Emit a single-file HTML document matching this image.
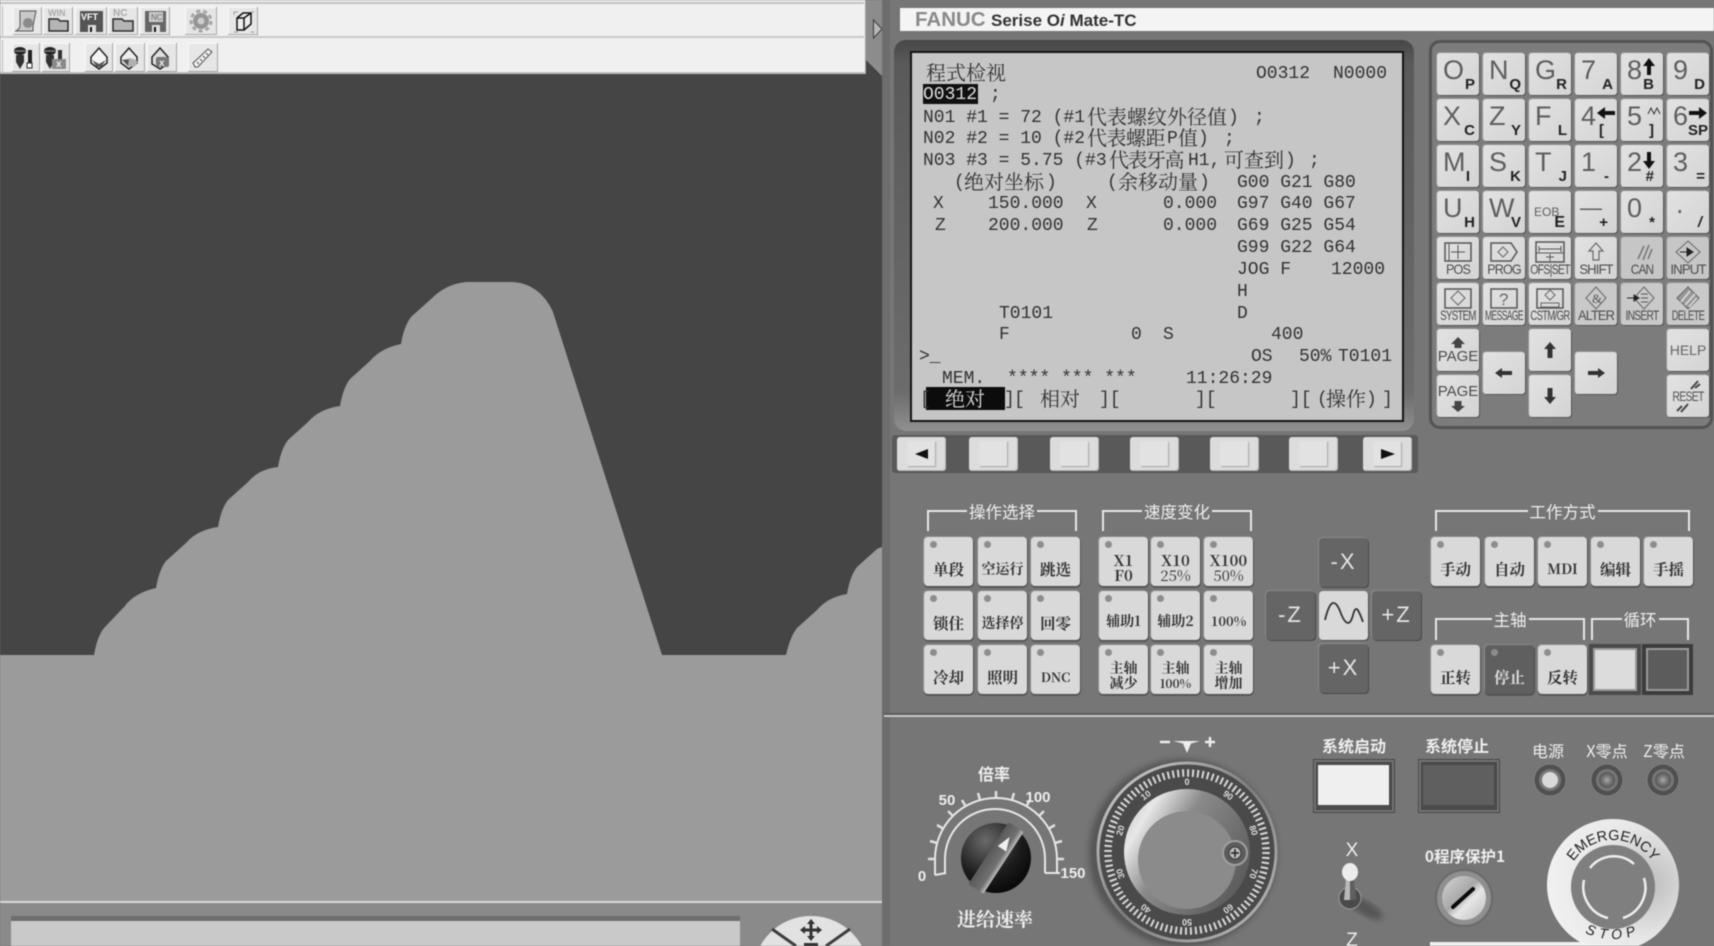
<!DOCTYPE html>
<html><head><meta charset="utf-8"><style>
html,body{margin:0;padding:0;width:1714px;height:946px;overflow:hidden;background:#767676}
#p{position:absolute;left:0;top:0;width:1714px;height:946px;overflow:hidden;filter:blur(.45px)}
*{box-sizing:border-box}
.a{position:absolute}
.l{position:absolute;left:0;top:0;height:20px;width:0;font:18px/18px "Liberation Mono","Noto Serif CJK SC",monospace;color:#333;transform:translateY(1px)}
.l span{position:absolute;white-space:pre}
.l .c{font:20px/20px "Noto Serif CJK SC","Liberation Serif",serif;top:-3px;color:#333}
.k{position:absolute;width:42px;height:42px;background:linear-gradient(135deg,#e2e2e2,#d4d4d4);border-radius:3px;box-shadow:1px 1px 0 #555,-1px -1px 0 #8f8f8f;font-family:"Liberation Sans",sans-serif;overflow:hidden}
.k b{position:absolute;left:6px;top:4px;font:400 27px/27px "Liberation Sans",sans-serif;color:#5e5e5e}
.k i{position:absolute;right:4px;bottom:3px;font:700 15px/15px "Liberation Sans",sans-serif;color:#222}
.k u{position:absolute;left:0;width:42px;bottom:3px;display:flex;justify-content:center;text-decoration:none;font:14px/14px "Liberation Sans",sans-serif;color:#4c4c4c;letter-spacing:-1px;white-space:nowrap}
.k svg{position:absolute;left:0;top:0}
.b{position:absolute;width:49px;height:49px;background:#d9d9d9;border-radius:4px;box-shadow:1px 1px 0 #4f4f4f,0 2px 0 #5c5c5c,-1px -1px 0 #8b8b8b;font:700 15.5px/15px "Noto Serif CJK SC","Liberation Serif",serif;color:#333;text-align:center;white-space:nowrap}
.b:before{content:"";position:absolute;left:6px;top:4px;width:7px;height:7px;border-radius:50%;background:#8d8d8d}
.b span{position:absolute;left:0;width:49px;top:24px;line-height:16px}
.b span.s{top:16px;line-height:15px;font-size:15px}
.g{position:absolute;width:49px;height:49px;background:#656565;border-radius:4px;box-shadow:1px 1px 0 #4a4a4a,-1px -1px 0 #8a8a8a;color:#e6e6e6;font:22px/47px "Liberation Sans",sans-serif;text-align:center;letter-spacing:2px}
.h{position:absolute;border:2px solid #e8e8e8;border-bottom:0;height:21px}
.h em{position:absolute;top:-11px;left:0;width:100%;text-align:center;font:normal 16.5px/20px "Noto Sans CJK SC",sans-serif;color:#eee}
.h em span{background:#767676;padding:0 2px}
.f{position:absolute;top:437px;width:49px;height:34px;background:#dcdcdc;border-radius:3px;box-shadow:inset -1px -1px 0 #b5b5b5}
.f:after{content:"";position:absolute;left:10px;top:4px;width:28px;height:25px;background:#e2e2e2;box-shadow:1px 1px 1px #a5a5a5}
.w{position:absolute;color:#efefef;font:700 16px/18px "Noto Sans CJK SC",sans-serif;white-space:nowrap;transform:translate(-50%,-50%)}
.tb{position:absolute;background:#e6e6e6;box-shadow:inset -1px -1px 0 #a8a8a8,inset 1px 1px 0 #f8f8f8}
</style></head><body><div id="p">

<!-- left viewport -->
<div class="a" style="left:0;top:0;width:884px;height:903px;background:#454545"></div>
<svg class="a" style="left:0;top:0" width="884" height="903" viewBox="0 0 884 903">
<path fill="#9b9b9b" d="M0 655H94Q97 637 104 628L124 607Q134 593 156 588Q159 570 166 561L186 543Q197 530 218 527Q221 509 228 500L248 482Q259 469 278 467Q281 449 288 440L308 422Q319 409 340 406Q343 388 350 379L370 361Q381 348 401 344Q404 326 411 317L431 299Q446 284 466 282H513Q540 284 553 312L662 655H786Q790 637 797 628L817 610Q828 597 847 594Q850 576 857 567L877 549L884 546V903H0Z"/>
</svg>
<div class="a" style="left:0;top:901px;width:884px;height:2px;background:#dadada"></div>
<div class="a" style="left:882px;top:880px;width:2px;height:22px;background:#d0d0d0"></div>
<div class="a" style="left:0;top:903px;width:884px;height:43px;background:#8a8a8a"></div>
<div class="a" style="left:11px;top:916px;width:729px;height:30px;background:#c9c9c9;border-top:5px solid #6e6e6e"></div>
<svg class="a" style="left:750px;top:910px" width="134" height="36" viewBox="750 910 134 36">
<path d="M760.200 946A58 58 0 0 1 861.800 946Z" fill="#e2e2e2"/>
<path d="M772 929L796 946M850 929L826 946" stroke="#3e3e3e" stroke-width="3" fill="none"/>
<path d="M811 921V939M802 930H820" stroke="#333" stroke-width="3"/><path d="M811 919l-4 5h8zM811 941l-4-5h8zM800 930l5-4v8zM822 930l-5-4v8z" fill="#333"/>
<rect x="804" y="943" width="14" height="3" fill="#333"/>
</svg>

<!-- strip -->
<div class="a" style="left:866px;top:0;width:16px;height:60px;background:#8c8c8c"></div>
<svg class="a" style="left:866px;top:0" width="18" height="76"><path d="M0 60L16 76V60V0H0Z" fill="#8c8c8c"/><path d="M7.500 20L16 29L7.500 38Z" fill="#b8b8b8" stroke="#3c3c3c" stroke-width="1"/></svg>
<div class="a" style="left:882px;top:0;width:8px;height:946px;background:#6d6d6d"></div>

<!-- toolbar -->
<div class="a" style="left:0;top:0;width:866px;height:74px;background:#f0f0f0;border-right:1px solid #a0a0a0;border-bottom:2px solid #bcbcbc"></div>
<div class="a" style="left:0;top:2px;width:864px;height:2px;background:#c2c2c2"></div>
<div class="a" style="left:0;top:36px;width:864px;height:2px;background:#c8c8c8"></div>
<div class="a" style="left:2px;top:6px;width:1px;height:30px;background:#bbb"></div>
<div class="a" style="left:2px;top:40px;width:1px;height:32px;background:#bbb"></div>
<div class="tb" style="left:13px;top:7px;width:29px;height:28px"></div>
<div class="tb" style="left:43px;top:7px;width:30px;height:28px"></div>
<div class="tb" style="left:75px;top:7px;width:32px;height:28px"></div>
<div class="tb" style="left:108px;top:7px;width:30px;height:28px"></div>
<div class="tb" style="left:140px;top:7px;width:30px;height:28px"></div>
<div class="tb" style="left:185px;top:7px;width:32px;height:28px"></div>
<div class="tb" style="left:228px;top:7px;width:30px;height:28px"></div>
<div class="tb" style="left:12px;top:43px;width:28px;height:29px"></div>
<div class="tb" style="left:42px;top:43px;width:28px;height:29px"></div>
<div class="tb" style="left:85px;top:43px;width:28px;height:29px"></div>
<div class="tb" style="left:115px;top:43px;width:30px;height:29px"></div>
<div class="tb" style="left:147px;top:43px;width:30px;height:29px"></div>
<div class="tb" style="left:188px;top:43px;width:30px;height:29px"></div>
<svg class="a" style="left:0;top:0" width="270" height="76" viewBox="0 0 270 76">
<path d="M20 11H36L33 26V31H16Q21 28 20 24Z" fill="#c8c8c8" stroke="#555"/><circle cx="28" cy="23" r="5" fill="#8a8a8a"/>
<text x="48" y="16" font-family="Liberation Sans" font-weight="700" font-size="9" fill="#aaa">WIN</text><path d="M49 19H58L60 21H68V31H49Z" fill="#b5b5b5" stroke="#2a2a2a" stroke-width="1.500"/>
<rect x="80" y="11" width="23" height="21" fill="#555"/><text x="81" y="20" font-family="Liberation Sans" font-weight="700" font-size="9" fill="#fff">VFT</text><rect x="88" y="25" width="8" height="7" fill="#ddd"/><rect x="90" y="27" width="2" height="5" fill="#111"/>
<text x="113" y="16" font-family="Liberation Sans" font-weight="700" font-size="10" fill="#aaa">NC</text><path d="M113 19H122L124 21H133V31H113Z" fill="#b5b5b5" stroke="#2a2a2a" stroke-width="1.500"/>
<rect x="145" y="11" width="21" height="21" fill="#666"/><rect x="149" y="12" width="14" height="10" fill="#ccc"/><text x="151" y="20" font-family="Liberation Sans" font-size="8" fill="#666">NC</text><rect x="152" y="25" width="8" height="7" fill="#ddd"/><rect x="154" y="27" width="2" height="5" fill="#111"/>
<circle cx="201" cy="21" r="8" fill="#959595"/><circle cx="201" cy="21" r="3.500" fill="#ccc"/><circle cx="201" cy="21" r="10" fill="none" stroke="#a5a5a5" stroke-width="3" stroke-dasharray="4 3"/>
<path d="M237 18L243 13H251V24L244 30H237ZM237 18H244V30M244 18L251 13" fill="#eee" stroke="#111" stroke-width="1.500"/><path d="M234 12h4M234 12v3M254 12h-3M234 32h4M254 32h-3" stroke="#999"/>
<ellipse cx="20" cy="51" rx="6" ry="4" fill="#222"/><rect x="14" y="50" width="12" height="2" fill="#666"/><path d="M16 55H24V62L20 69L16 62Z" fill="#333"/><rect x="28" y="50" width="4" height="13" fill="#222"/><rect x="27" y="63" width="5" height="5" fill="#fff" stroke="#222"/>
<ellipse cx="50" cy="51" rx="6" ry="4" fill="#222"/><rect x="44" y="50" width="12" height="2" fill="#666"/><path d="M46 55H54V62L50 69L46 62Z" fill="#333"/><rect x="58" y="50" width="4" height="12" fill="#333"/><rect x="52" y="59" width="14" height="10" fill="#8a8a8a"/><text x="56" y="67" font-family="Liberation Sans" font-weight="700" font-size="10" fill="#eee">x</text>
<path d="M99 48L107 57V63L99 69L91 63V57Z" fill="#f4f4f4" stroke="#222" stroke-width="1.500"/><path d="M92 60L97 67H101L106 60L99 64Z" fill="#555"/>
<path d="M129 48L137 57V63L129 69L121 63V57Z" fill="#ededed" stroke="#222" stroke-width="1.500"/><path d="M122 60L129 67V59Z" fill="#555"/><path d="M129 58l5 1 4 3-4 5-6-1z" fill="#b0b0b0"/>
<path d="M160 48L168 57V64L160 69L152 64V57Z" fill="#ddd" stroke="#222" stroke-width="1.500"/><rect x="156" y="57" width="13" height="10" rx="2" fill="#777"/><text x="159" y="66" font-family="Liberation Sans" font-weight="700" font-size="10" fill="#eee">x</text>
<path d="M195 67L193 63L208 49L212 52L198 67Z" fill="#eee" stroke="#555" stroke-width="1"/><path d="M197 62l2 2M200 59l2 2M203 56l2 2M206 53l2 2" stroke="#555"/>
</svg>

<!-- header -->
<div class="a" style="left:900px;top:8px;width:814px;height:23px;background:#f4f4f4"></div>
<div class="a" style="left:915px;top:8px;font:700 20.500px/23px 'Liberation Sans',sans-serif;color:#8a8a8a;white-space:nowrap">FANUC</div>
<div class="a" style="left:991px;top:9px;font:700 17px/23px 'Liberation Sans',sans-serif;color:#333;white-space:nowrap">Serise O<i>i</i> Mate-TC</div>

<!-- screen -->
<div class="a" style="left:894px;top:40px;width:520px;height:391px;border-radius:12px;background:linear-gradient(#474747 0,#5a5a5a 6%,#6c6c6c 90%,#909090 100%)"></div>
<div class="a" style="left:910px;top:51px;width:494px;height:371px;background:#c6c6c6;border:2px solid #141414"></div>
<div class="a" style="left:923px;top:84px;width:55px;height:20px;background:#111"></div>
<div class="a" style="left:926px;top:387px;width:79px;height:23px;background:#0c0c0c"></div>

<div class="l" style="top:64px"><span class="c" style="left:926px">程式检视</span><span style="left:1256px">O0312</span><span style="left:1333px">N0000</span></div>
<div class="l" style="top:85px"><span style="left:923px;color:#ddd">O0312</span><span style="left:990px">;</span></div>
<div class="l" style="top:108px"><span style="left:923px">N01 #1 = 72 (#1</span><span class="c" style="left:1087px">代表螺纹外径值</span><span style="left:1228px">)</span><span style="left:1254px">;</span></div>
<div class="l" style="top:129px"><span style="left:923px">N02 #2 = 10 (#2</span><span class="c" style="left:1087px;letter-spacing:-.5px">代表螺距</span><span style="left:1167px">P</span><span class="c" style="left:1178px">值</span><span style="left:1198px">)</span><span style="left:1224px">;</span></div>
<div class="l" style="top:151px"><span style="left:923px">N03 #3 = 5.75 (#3</span><span class="c" style="left:1109px;letter-spacing:-1.500px">代表牙高</span><span style="left:1188px">H1,</span><span class="c" style="left:1224px">可查到</span><span style="left:1285px">)</span><span style="left:1309px">;</span></div>
<div class="l" style="top:173px"><span style="left:954px">(</span><span class="c" style="left:964px">绝对坐标</span><span style="left:1046px">)</span><span style="left:1107px">(</span><span class="c" style="left:1118px">余移动量</span><span style="left:1199px">)</span><span style="left:1237px">G00 G21 G80</span></div>
<div class="l" style="top:194px"><span style="left:933px">X</span><span style="left:988px">150.000</span><span style="left:1086px">X</span><span style="left:1163px">0.000</span><span style="left:1237px">G97 G40 G67</span></div>
<div class="l" style="top:216px"><span style="left:935px">Z</span><span style="left:988px">200.000</span><span style="left:1087px">Z</span><span style="left:1163px">0.000</span><span style="left:1237px">G69 G25 G54</span></div>
<div class="l" style="top:238px"><span style="left:1237px">G99 G22 G64</span></div>
<div class="l" style="top:260px"><span style="left:1237px">JOG F</span><span style="left:1331px">12000</span></div>
<div class="l" style="top:282px"><span style="left:1237px">H</span></div>
<div class="l" style="top:304px"><span style="left:999px">T0101</span><span style="left:1237px">D</span></div>
<div class="l" style="top:325px"><span style="left:999px">F</span><span style="left:1131px">0</span><span style="left:1163px">S</span><span style="left:1271px">400</span></div>
<div class="l" style="top:347px"><span style="left:919px">&gt;_</span><span style="left:1251px">OS</span><span style="left:1299px">50%</span><span style="left:1338px">T0101</span></div>
<div class="l" style="top:369px"><span style="left:942px">MEM.</span><span style="left:1007px">**** *** ***</span><span style="left:1186px">11:26:29</span></div>
<div class="l" style="top:390px"><span style="left:920px">[</span><span class="c" style="left:945px;color:#ddd">绝对</span><span style="left:1004px">]</span><span style="left:1014px">[</span><span class="c" style="left:1040px">相对</span><span style="left:1099px">][</span><span style="left:1195px">][</span><span style="left:1290px">][</span><span style="left:1317px">(</span><span class="c" style="left:1326px">操作</span><span style="left:1366px">)</span><span style="left:1382px">]</span></div>

<!-- soft keys -->
<div class="a" style="left:892px;top:435px;width:526px;height:38px;background:#595959;border-radius:3px"></div>
<div class="f" style="left:897px"></div><div class="f" style="left:969px"></div><div class="f" style="left:1050px"></div><div class="f" style="left:1130px"></div><div class="f" style="left:1210px"></div><div class="f" style="left:1289px"></div><div class="f" style="left:1363px"></div>
<svg class="a" style="left:880px;top:430px;z-index:2" width="540" height="50"><path d="M35 24L48 19V29Z" fill="#111"/><path d="M501 19L515 24L501 29Z" fill="#111"/></svg>

<!-- keypad -->
<div class="a" style="left:1429px;top:40px;width:284px;height:389px;border:3px solid #535353;border-radius:11px;background:#7c7c7c"></div>
<div class="k" style="left:1437px;top:53px"><b>O</b><i>P</i></div>
<div class="k" style="left:1483px;top:53px"><b>N</b><i>Q</i></div>
<div class="k" style="left:1529px;top:53px"><b>G</b><i>R</i></div>
<div class="k" style="left:1575px;top:53px"><b>7</b><i>A</i></div>
<div class="k" style="left:1621px;top:53px"><b>8</b><i style="right:9px">B</i><svg width="42" height="42"><path d="M28 5L34 13H30V22H26V13H22Z" fill="#111"/></svg></div>
<div class="k" style="left:1667px;top:53px"><b>9</b><i>D</i></div>
<div class="k" style="left:1437px;top:99px"><b>X</b><i>C</i></div>
<div class="k" style="left:1483px;top:99px"><b>Z</b><i>Y</i></div>
<div class="k" style="left:1529px;top:99px"><b>F</b><i>L</i></div>
<div class="k" style="left:1575px;top:99px"><b>4</b><i style="right:13px">[</i><svg width="42" height="42"><path d="M22 14L30 8V12H40V16H30V20Z" fill="#111"/></svg></div>
<div class="k" style="left:1621px;top:99px"><b>5</b><i style="right:9px">]</i><svg width="42" height="42"><path d="M27 15L30 9L33 15L36 9L39 15" fill="none" stroke="#333"/></svg></div>
<div class="k" style="left:1667px;top:99px"><b>6</b><i style="right:1px">SP</i><svg width="42" height="42"><path d="M40 14L32 8V12H22V16H32V20Z" fill="#111"/></svg></div>
<div class="k" style="left:1437px;top:145px"><b>M</b><i style="right:9px">I</i></div>
<div class="k" style="left:1483px;top:145px"><b>S</b><i>K</i></div>
<div class="k" style="left:1529px;top:145px"><b>T</b><i>J</i></div>
<div class="k" style="left:1575px;top:145px"><b>1</b><i style="right:8px">-</i></div>
<div class="k" style="left:1621px;top:145px"><b>2</b><i style="right:9px">#</i><svg width="42" height="42"><path d="M28 24L34 16H30V7H26V16H22Z" fill="#111"/></svg></div>
<div class="k" style="left:1667px;top:145px"><b>3</b><i>=</i></div>
<div class="k" style="left:1437px;top:191px"><b>U</b><i>H</i></div>
<div class="k" style="left:1483px;top:191px"><b>W</b><i>V</i></div>
<div class="k" style="left:1529px;top:191px"><b style="font-size:12px;top:8px;left:5px">EOB</b><i style="right:6px;font-size:16px">E</i></div>
<div class="k" style="left:1575px;top:191px"><b style="font-size:22px;top:3px;left:5px">&#8212;</b><i style="right:9px">+</i></div>
<div class="k" style="left:1621px;top:191px"><b>0</b><i style="right:8px">*</i></div>
<div class="k" style="left:1667px;top:191px"><b style="left:9px;top:0">.</b><i style="right:7px;font-style:italic">/</i></div>

<div class="k" style="left:1437px;top:237px"><u style="transform:scaleX(.9)">POS</u><svg width="42" height="42"><rect x="8" y="6" width="26" height="18" fill="none" stroke="#555" stroke-width="1.500"/><path d="M21 8V22M14 15H28M12 6V24" stroke="#555" fill="none"/></svg></div>
<div class="k" style="left:1483px;top:237px"><u style="transform:scaleX(.9)">PROG</u><svg width="42" height="42"><path d="M8 6H28L34 15L28 24H8Z" fill="none" stroke="#555" stroke-width="1.500"/><path d="M20 10L25 15L20 20L15 15Z" fill="none" stroke="#666"/></svg></div>
<div class="k" style="left:1529px;top:237px"><u style="transform:scaleX(.75)">OFS|SET</u><svg width="42" height="42"><rect x="7" y="5" width="28" height="20" fill="none" stroke="#555" stroke-width="1.500"/><path d="M10 12H32M10 9V15M32 9V15M7 16H35M21 17V24M17 20H25" stroke="#555" fill="none"/></svg></div>
<div class="k" style="left:1575px;top:237px"><u style="transform:scaleX(.94)">SHIFT</u><svg width="42" height="42"><path d="M21 6L28 14H24V23H18V14H14Z" fill="none" stroke="#666" stroke-width="1.200"/></svg></div>
<div class="k" style="left:1621px;top:237px;background:#c6c6c6"><u style="transform:scaleX(.85)">CAN</u><svg width="42" height="42"><path d="M17 22L23 9M22 23L28 8M27 22L31 12" stroke="#777" stroke-width="1.600"/></svg></div>
<div class="k" style="left:1667px;top:237px;background:#c6c6c6"><u style="transform:scaleX(.95)">INPUT</u><svg width="42" height="42"><path d="M21 4L33 15L21 26L9 15Z" fill="none" stroke="#666"/><path d="M13 15H23M20 11L26 15L20 19Z" stroke="#222" fill="#222"/></svg></div>

<div class="k" style="left:1437px;top:283px"><u style="transform:scaleX(.69)">SYSTEM</u><svg width="42" height="42"><rect x="8" y="6" width="26" height="19" fill="none" stroke="#555" stroke-width="1.500"/><path d="M21 8L28 15L21 22L14 15Z" fill="none" stroke="#666"/></svg></div>
<div class="k" style="left:1483px;top:283px"><u style="transform:scaleX(.61)">MESSAGE</u><svg width="42" height="42"><rect x="8" y="6" width="26" height="19" fill="none" stroke="#555" stroke-width="1.500"/><text x="16" y="22" font-family="Liberation Sans" font-size="17" fill="#666">?</text></svg></div>
<div class="k" style="left:1529px;top:283px"><u style="transform:scaleX(.68)">CSTM/GR</u><svg width="42" height="42"><rect x="8" y="6" width="26" height="19" fill="none" stroke="#555" stroke-width="1.500"/><path d="M21 7L26 12L21 17L16 12ZM12 20H30V24H12Z" fill="none" stroke="#666"/></svg></div>
<div class="k" style="left:1575px;top:283px;background:#c9c9c9"><u style="transform:scaleX(.92)">ALTER</u><svg width="42" height="42"><path d="M21 4L31 15L21 26L11 15Z" fill="none" stroke="#666"/><text x="17" y="20" font-family="Liberation Serif" font-size="13" fill="#555">&amp;</text></svg></div>
<div class="k" style="left:1621px;top:283px;background:#c9c9c9"><u style="transform:scaleX(.73)">INSERT</u><svg width="42" height="42"><path d="M23 4L33 15L23 26L13 15Z" fill="none" stroke="#666"/><path d="M6 15H16M13 12L18 15L13 18Z" stroke="#222" fill="#222"/><path d="M20 11H27M20 15H27M20 19H27" stroke="#555"/></svg></div>
<div class="k" style="left:1667px;top:283px;background:#c9c9c9"><u style="transform:scaleX(.67)">DELETE</u><svg width="42" height="42"><path d="M21 4L32 15L21 26L10 15Z" fill="#999" stroke="#666"/><path d="M14 19L23 8M18 22L28 11M22 24L30 15" stroke="#e0e0e0" stroke-width="1.500"/></svg></div>

<div class="k" style="left:1437px;top:329px"><u style="font:15px/15px 'Liberation Sans',sans-serif;letter-spacing:0;bottom:7px">PAGE</u><svg width="42" height="42"><path d="M21 8L28 15H24.500V19H17.500V15H14Z" fill="#444"/></svg></div>
<div class="k" style="left:1437px;top:375px"><u style="font:15px/15px 'Liberation Sans',sans-serif;letter-spacing:0;bottom:18px">PAGE</u><svg width="42" height="42"><path d="M21 37L28 31H24.500V26H17.500V31H14Z" fill="#444"/></svg></div>
<div class="k" style="left:1483px;top:352px"><svg width="42" height="42"><path d="M12 21L19 16V19H29V23H19V26Z" fill="#333"/></svg></div>
<div class="k" style="left:1529px;top:329px"><svg width="42" height="42"><path d="M21 13L27 20H23.500V29H18.500V20H15Z" fill="#333"/></svg></div>
<div class="k" style="left:1529px;top:375px"><svg width="42" height="42"><path d="M21 29L27 22H23.500V13H18.500V22H15Z" fill="#333"/></svg></div>
<div class="k" style="left:1575px;top:352px"><svg width="42" height="42"><path d="M30 21L23 16V19H13V23H23V26Z" fill="#333"/></svg></div>
<div class="k" style="left:1667px;top:329px"><u style="font:14px/14px 'Liberation Sans',sans-serif;letter-spacing:0;bottom:14px;color:#666">HELP</u></div>
<div class="k" style="left:1667px;top:375px"><u style="font:14px/14px 'Liberation Sans',sans-serif;bottom:14px;color:#555;transform:scaleX(.75)">RESET</u><svg width="42" height="42"><path d="M24 14L31 6M14 37L21 29M28 13L33 9M10 36L15 31" stroke="#444" stroke-width="2"/></svg></div>

<!-- operator groups -->
<div class="h" style="left:927px;top:510px;width:150px"><em><span>操作选择</span></em></div>
<div class="h" style="left:1102px;top:510px;width:150px"><em><span>速度变化</span></em></div>
<div class="h" style="left:1435px;top:510px;width:255px"><em><span>工作方式</span></em></div>
<div class="h" style="left:1435px;top:618px;width:150px;height:22px"><em><span>主轴</span></em></div>
<div class="h" style="left:1591px;top:618px;width:98px;height:22px"><em><span>循环</span></em></div>

<div class="b" style="left:924px;top:537px"><span>单段</span></div>
<div class="b" style="left:978px;top:537px"><span style="font-size:14px">空运行</span></div>
<div class="b" style="left:1031px;top:537px"><span>跳选</span></div>
<div class="b" style="left:924px;top:591px"><span>锁住</span></div>
<div class="b" style="left:978px;top:591px"><span style="font-size:14px">选择停</span></div>
<div class="b" style="left:1031px;top:591px"><span>回零</span></div>
<div class="b" style="left:924px;top:645px"><span>冷却</span></div>
<div class="b" style="left:978px;top:645px"><span>照明</span></div>
<div class="b" style="left:1031px;top:645px"><span style="font-size:13px">DNC</span></div>

<div class="b" style="left:1099px;top:537px"><span class="s">X1<br>F0</span></div>
<div class="b" style="left:1151px;top:537px"><span class="s">X10<br><span style="position:static;font-weight:400">25%</span></span></div>
<div class="b" style="left:1204px;top:537px"><span class="s">X100<br><span style="position:static;font-weight:400">50%</span></span></div>
<div class="b" style="left:1099px;top:591px"><span style="font-size:14px;top:22px">辅助1</span></div>
<div class="b" style="left:1151px;top:591px"><span style="font-size:14px;top:22px">辅助2</span></div>
<div class="b" style="left:1204px;top:591px"><span style="font-size:13px;top:22px">100%</span></div>
<div class="b" style="left:1099px;top:645px"><span class="s" style="font-size:14px">主轴<br>减少</span></div>
<div class="b" style="left:1151px;top:645px"><span class="s" style="font-size:14px">主轴<br><span style="position:static;font-size:12px">100%</span></span></div>
<div class="b" style="left:1204px;top:645px"><span class="s" style="font-size:14px">主轴<br>增加</span></div>

<div class="g" style="left:1319px;top:538px">-X</div>
<div class="g" style="left:1266px;top:591px">-Z</div>
<div class="g" style="left:1372px;top:591px">+Z</div>
<div class="g" style="left:1319px;top:644px">+X</div>
<div class="a" style="left:1319px;top:591px;width:49px;height:49px;background:#d9d9d9;border-radius:4px;box-shadow:1px 1px 0 #4f4f4f"></div>
<svg class="a" style="left:1319px;top:591px" width="49" height="49"><path d="M6 29C11 8 16 8 21 20C26 34 31 36 34 24C37 12 40 20 44 31" fill="none" stroke="#333" stroke-width="1.800"/></svg>

<div class="b" style="left:1431px;top:537px"><span>手动</span></div>
<div class="b" style="left:1485px;top:537px"><span>自动</span></div>
<div class="b" style="left:1538px;top:537px"><span style="font-size:14px">MDI</span></div>
<div class="b" style="left:1591px;top:537px"><span>编辑</span></div>
<div class="b" style="left:1644px;top:537px"><span>手摇</span></div>
<div class="b" style="left:1431px;top:645px"><span>正转</span></div>
<div class="b" style="left:1485px;top:645px;background:#5f5f5f;color:#ddd"><span>停止</span></div>
<div class="b" style="left:1538px;top:645px"><span>反转</span></div>
<div class="a" style="left:1589px;top:644px;width:52px;height:51px;background:#dcdcdc;border:4px solid #4a4a4a;box-shadow:inset 0 0 0 2px #9a9a9a"></div>
<div class="a" style="left:1642px;top:644px;width:51px;height:51px;background:#5c5c5c;border:4px solid #3c3c3c;box-shadow:inset 0 0 0 2px #9a9a9a"></div>

<!-- divider -->
<div class="a" style="left:884px;top:713px;width:830px;height:2px;background:#5d5d5d"></div>
<div class="a" style="left:884px;top:715px;width:830px;height:2px;background:#c8c8c8"></div>

<!-- lower controls -->
<svg class="a" style="left:884px;top:717px" width="830" height="229" viewBox="884 717 830 229">
<defs>
<linearGradient id="m" x1="0" y1="0" x2="1" y2="0.600"><stop offset="0" stop-color="#b5b5b5"/><stop offset=".22" stop-color="#e8e8e8"/><stop offset=".48" stop-color="#8a8a8a"/><stop offset="1" stop-color="#5e5e5e"/></linearGradient>
<linearGradient id="r" x1="0" y1="0" x2="1" y2="1"><stop offset="0" stop-color="#d8d8d8"/><stop offset=".5" stop-color="#7e7e7e"/><stop offset="1" stop-color="#c0c0c0"/></linearGradient>
<linearGradient id="lk" x1="0" y1="0" x2="1" y2="1"><stop offset="0" stop-color="#d5d5d5"/><stop offset=".45" stop-color="#a8a8a8"/><stop offset=".6" stop-color="#e6e6e6"/><stop offset="1" stop-color="#bcbcbc"/></linearGradient>
<radialGradient id="kn" cx=".35" cy=".25" r=".9"><stop offset="0" stop-color="#6a6a6a"/><stop offset=".55" stop-color="#1d1d1d"/><stop offset="1" stop-color="#000"/></radialGradient>
<linearGradient id="pb" x1="0" y1="0" x2="1" y2="0"><stop offset="0" stop-color="#5a5a5a"/><stop offset=".7" stop-color="#707070"/><stop offset="1" stop-color="#bdbdbd"/></linearGradient>
<radialGradient id="eb" cx=".75" cy=".5" r=".9"><stop offset="0" stop-color="#bbb"/><stop offset=".5" stop-color="#e8e8e8"/><stop offset="1" stop-color="#f5f5f5"/></radialGradient>
<radialGradient id="ld" cx=".5" cy=".5" r=".5"><stop offset="0" stop-color="#aaa"/><stop offset=".5" stop-color="#7a7a7a"/><stop offset="1" stop-color="#555"/></radialGradient>
<filter id="bl"><feGaussianBlur stdDeviation="3"/></filter>
<path id="em" d="M1566 887A47 47 0 0 1 1660 887"/>
<path id="st" d="M1553 885A60 54 0 0 0 1673 885"/>
</defs>

<!-- feed dial -->
<g fill="none" stroke="#e8e8e8" stroke-width="2">
<path d="M935 875V859A61 61 0 0 1 1057 859V873"/>
<path d="M945 873V859A50 50 0 0 1 1045 859V873"/>
<path d="M935 875L946 873M1045 873H1060"/>
</g>
<g stroke="#e0e0e0" stroke-width="2.500">
<path d="M935 859H928M937 843L930 841M943 828.500L937 825M953 816L948 811M965.500 806L962 800M980 800L978 793M996 798V791M1012 800L1014 793M1026.500 806L1030 800M1039 816L1044 811M1049 828.500L1055 825M1055 843L1062 841M1057 859H1064"/>
</g>
<text x="922" y="881" fill="#eee" font-family="Liberation Sans" font-weight="700" font-size="15" text-anchor="middle">0</text>
<text x="947" y="805" fill="#eee" font-family="Liberation Sans" font-weight="700" font-size="15" text-anchor="middle">50</text>
<text x="1038" y="802" fill="#eee" font-family="Liberation Sans" font-weight="700" font-size="15" text-anchor="middle">100</text>
<text x="1073" y="878" fill="#eee" font-family="Liberation Sans" font-weight="700" font-size="15" text-anchor="middle">150</text>
<circle cx="996" cy="858" r="35" fill="url(#kn)"/>
<g transform="rotate(33 996 858)"><rect x="987" y="821" width="18" height="74" rx="2" fill="url(#pb)"/><path d="M996 833L1001 847H991Z" fill="#efefef"/></g>

<!-- hand wheel -->
<circle cx="1183" cy="853" r="94" fill="#4a4a4a" filter="url(#bl)" opacity=".7"/>
<circle cx="1187" cy="852" r="89" fill="#4a4a4a" stroke="url(#r)" stroke-width="3"/>
<circle cx="1187" cy="852" r="79" fill="none" stroke="#d8d8d8" stroke-width="7.500" stroke-dasharray="2 2.963"/>
<circle cx="1187" cy="852" r="63" fill="url(#m)"/>
<circle cx="1187" cy="860" r="49" fill="#8b8b8b"/>
<circle cx="1235" cy="853" r="12" fill="#5c5c5c" stroke="#a0a0a0" stroke-width="2"/><circle cx="1235" cy="853" r="6" fill="#bbb" stroke="#333"/><path d="M1231 853H1239M1235 849V857" stroke="#222" stroke-width="1.500"/>
<g font-family="Liberation Sans" font-weight="700" font-size="9" fill="#ddd" text-anchor="middle">
<text x="1187" y="785">0</text>
<text x="1187" y="785" transform="rotate(-36 1187 852)">10</text>
<text x="1187" y="785" transform="rotate(-72 1187 852)">20</text>
<text x="1187" y="785" transform="rotate(-108 1187 852)">30</text>
<text x="1187" y="785" transform="rotate(-144 1187 852)">40</text>
<text x="1187" y="785" transform="rotate(180 1187 852)">50</text>
<text x="1187" y="785" transform="rotate(144 1187 852)">60</text>
<text x="1187" y="785" transform="rotate(108 1187 852)">70</text>
<text x="1187" y="785" transform="rotate(72 1187 852)">80</text>
<text x="1187" y="785" transform="rotate(36 1187 852)">90</text>
</g>
<path d="M1160 742H1170M1205 742H1215M1210 737V747" stroke="#eee" stroke-width="2.500"/>
<path d="M1173 741H1200L1191 743.500L1187 753L1183 743.500Z" fill="#eee"/>

<!-- system buttons -->
<rect x="1313" y="759" width="82" height="54" fill="#4a4a4a"/><rect x="1315" y="761" width="78" height="50" fill="none" stroke="#7e7e7e" stroke-width="1.500"/><rect x="1318" y="765" width="71" height="40" fill="#efefef"/>
<rect x="1418" y="759" width="82" height="54" fill="#4a4a4a"/><rect x="1420" y="761" width="78" height="50" fill="none" stroke="#7e7e7e" stroke-width="1.500"/><rect x="1423" y="765" width="71" height="40" fill="#5f5f5f"/>

<!-- LEDs -->
<g>
<circle cx="1550" cy="780" r="16" fill="#505050" stroke="#808080"/><circle cx="1550" cy="780" r="11" fill="#777"/><circle cx="1550" cy="780" r="8" fill="#d9d9d9"/>
<circle cx="1607" cy="780" r="16" fill="#505050" stroke="#808080"/><circle cx="1607" cy="780" r="11" fill="#777"/><circle cx="1607" cy="780" r="8" fill="url(#ld)"/>
<circle cx="1663" cy="780" r="16" fill="#505050" stroke="#808080"/><circle cx="1663" cy="780" r="11" fill="#777"/><circle cx="1663" cy="780" r="8" fill="url(#ld)"/>
</g>

<!-- toggle -->
<ellipse cx="1365" cy="908" rx="20" ry="7" fill="#555" filter="url(#bl)" transform="rotate(30 1365 908)"/>
<circle cx="1350" cy="898" r="11" fill="#4a4a4a" stroke="#9a9a9a"/>
<path d="M1346 878H1354L1356 900H1344Z" fill="#b9b9b9"/><path d="M1350 878H1354L1356 900H1350Z" fill="#5e5e5e"/>
<ellipse cx="1350" cy="872" rx="8" ry="9" fill="#ececec"/>
<text x="1352" y="856" text-anchor="middle" fill="#eee" font-family="Liberation Sans" font-size="19">X</text>
<text x="1352" y="946" text-anchor="middle" fill="#eee" font-family="Liberation Sans" font-size="19">Z</text>

<!-- key lock -->
<circle cx="1464" cy="898" r="28" fill="#8f8f8f" stroke="#6a6a6a" stroke-width="2"/>
<circle cx="1464" cy="898" r="22" fill="url(#lk)"/>
<path d="M1453 907L1473 889" stroke="#0c0c0c" stroke-width="4" stroke-linecap="round"/>

<!-- emergency -->
<path d="M1587.800 946A66 66 0 1 1 1638.200 946Z" fill="url(#eb)"/>
<circle cx="1613" cy="887" r="42" fill="#7f7f7f"/>
<g fill="none" stroke="#efefef" stroke-width="2.500">
<path d="M1590 868A30 30 0 0 1 1634 864"/><path d="M1584 880A32 32 0 0 0 1608 918"/><path d="M1644 878A32 32 0 0 1 1623 918"/>
</g>
<text font-family="Liberation Sans" font-size="14.500" fill="#222"><textPath href="#em" startOffset="50%" text-anchor="middle">EMERGENCY</textPath></text>
<text font-family="Liberation Sans" font-size="14" font-style="italic" fill="#222" letter-spacing="5"><textPath href="#st" startOffset="50%" text-anchor="middle">STOP</textPath></text>
<rect x="1430" y="942" width="158" height="4" fill="#f0f0f0"/>
</svg>

<div class="w" style="left:994px;top:773px">倍率</div>
<div class="w" style="left:995px;top:919px;font-size:19px;font-family:'Noto Serif CJK SC',serif">进给速率</div>
<div class="w" style="left:1354px;top:745px">系统启动</div>
<div class="w" style="left:1457px;top:745px">系统停止</div>
<div class="w" style="left:1548px;top:750px;font-weight:400">电源</div>
<div class="w" style="left:1607px;top:750px;font-weight:400">X零点</div>
<div class="w" style="left:1664px;top:750px;font-weight:400">Z零点</div>
<div class="w" style="left:1465px;top:856px;font-size:15.500px">0程序保护1</div>
</div></body></html>
